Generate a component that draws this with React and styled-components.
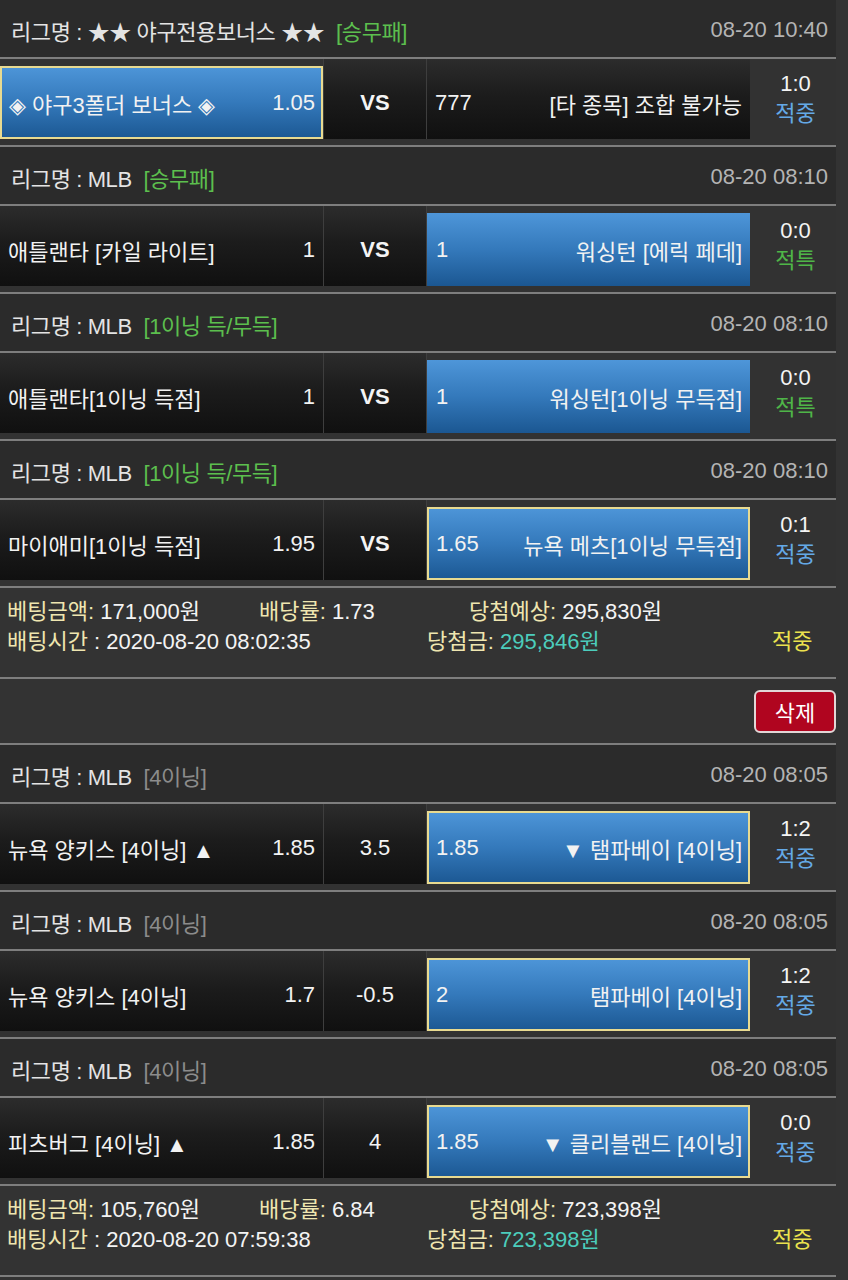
import React from "react";
import styled, { createGlobalStyle, css } from "styled-components";

const Global = createGlobalStyle`
  html, body { margin: 0; padding: 0; background: #333333; }
  body { font-family: "Liberation Sans", "Noto Sans CJK KR", sans-serif; color: #eeeeee; }
`;

const Page = styled.div`
  width: 836px;
  font-size: 22px;
`;

const Header = styled.div`
  height: 59px;
  box-sizing: border-box;
  padding: 3px 8px 0 11px;
  display: flex;
  align-items: center;
  justify-content: space-between;
  background: #2b2b2b;
  border-bottom: 2px solid #7e7e7e;
  color: #e4e4e4;
`;

const League = styled.span`
  letter-spacing: -0.4px;
`;

const Tag = styled.span`
  margin-left: 6px;
  color: ${(p) => (p.$gray ? "#8c8c8c" : "#5cbf4e")};
`;

const Time = styled.span`
  color: #b4b4b4;
`;

const MatchRow = styled.div`
  display: flex;
  height: 88px;
  box-sizing: border-box;
  padding-bottom: 6px;
  background: #323232;
  border-bottom: 2px solid #7e7e7e;
`;

const darkBg = css`
  background: linear-gradient(#2c2c2c 0%, #1c1c1c 45%, #101010 100%);
`;

const Side = styled.div`
  width: 323px;
  box-sizing: border-box;
  display: flex;
  align-items: center;
  justify-content: space-between;
  color: #f2f2f2;
  ${(p) =>
    p.$blue
      ? css`
          margin-top: 7px;
          height: 73px;
          padding: 0 8px 0 9px;
          background: linear-gradient(#4e96d9 0%, #3479bb 50%, #1b5792 100%);
          box-shadow: ${p.$sel ? "inset 0 0 0 2px #e8da90" : "none"};
        `
      : css`
          height: 80px;
          padding: 8px 8px 0 8px;
          ${darkBg}
        `}
`;

const Mid = styled.div`
  width: 104px;
  height: 80px;
  box-sizing: border-box;
  padding-top: 8px;
  display: flex;
  align-items: center;
  justify-content: center;
  border-left: 1px solid #3e3e3e;
  border-right: 1px solid #3e3e3e;
  font-weight: ${(p) => (p.$bold ? 700 : 400)};
  color: #f4f4f4;
  ${darkBg}
`;

const Score = styled.div`
  flex: 1;
  display: flex;
  flex-direction: column;
  align-items: center;
  justify-content: center;
  padding-left: 5px;
  line-height: 30px;
  color: #f4f4f4;
`;

const Result = styled.span`
  color: ${(p) => (p.$special ? "#4fb548" : "#64a9e6")};
`;

const Summary = styled.div`
  box-sizing: border-box;
  height: 91px;
  padding: 9px 0 0 7px;
  background: #333333;
  border-bottom: 2px solid #7e7e7e;
  line-height: 30px;
`;

const SumLine = styled.div`
  display: flex;
  white-space: nowrap;
`;

const SumItem = styled.div`
  width: ${(p) => p.$w}px;
  flex: none;
`;

const Label = styled.span`
  color: #efe6b0;
`;

const Val = styled.span`
  color: ${(p) => (p.$teal ? "#4ccdbc" : "#f4f4f4")};
`;

const Hit = styled.span`
  color: #ebe24e;
`;

const DeleteRow = styled.div`
  height: 66px;
  box-sizing: border-box;
  display: flex;
  align-items: center;
  justify-content: flex-end;
  background: #333333;
  border-bottom: 2px solid #7e7e7e;
`;

const DeleteBtn = styled.button`
  width: 82px;
  height: 43px;
  border: 2px solid #e2d6d6;
  border-radius: 6px;
  background: #b0051f;
  color: #ffffff;
  font-family: inherit;
  font-size: 22px;
  padding: 0;
`;

const matchesA = [
  {
    league: "★★ 야구전용보너스 ★★",
    tag: "[승무패]",
    time: "08-20 10:40",
    home: "◈ 야구3폴더 보너스 ◈",
    homeOdds: "1.05",
    homeSel: "sel",
    mid: "VS",
    awayOdds: "777",
    away: "[타 종목] 조합 불가능",
    awaySel: null,
    score: "1:0",
    result: "적중",
  },
  {
    league: "MLB",
    tag: "[승무패]",
    time: "08-20 08:10",
    home: "애틀랜타 [카일 라이트]",
    homeOdds: "1",
    homeSel: null,
    mid: "VS",
    awayOdds: "1",
    away: "워싱턴 [에릭 페데]",
    awaySel: "blue",
    score: "0:0",
    result: "적특",
  },
  {
    league: "MLB",
    tag: "[1이닝 득/무득]",
    time: "08-20 08:10",
    home: "애틀랜타[1이닝 득점]",
    homeOdds: "1",
    homeSel: null,
    mid: "VS",
    awayOdds: "1",
    away: "워싱턴[1이닝 무득점]",
    awaySel: "blue",
    score: "0:0",
    result: "적특",
  },
  {
    league: "MLB",
    tag: "[1이닝 득/무득]",
    time: "08-20 08:10",
    home: "마이애미[1이닝 득점]",
    homeOdds: "1.95",
    homeSel: null,
    mid: "VS",
    awayOdds: "1.65",
    away: "뉴욕 메츠[1이닝 무득점]",
    awaySel: "sel",
    score: "0:1",
    result: "적중",
  },
];

const matchesB = [
  {
    league: "MLB",
    tag: "[4이닝]",
    gray: true,
    time: "08-20 08:05",
    home: "뉴욕 양키스 [4이닝] ▲",
    homeOdds: "1.85",
    homeSel: null,
    mid: "3.5",
    awayOdds: "1.85",
    away: "▼ 탬파베이 [4이닝]",
    awaySel: "sel",
    score: "1:2",
    result: "적중",
  },
  {
    league: "MLB",
    tag: "[4이닝]",
    gray: true,
    time: "08-20 08:05",
    home: "뉴욕 양키스 [4이닝]",
    homeOdds: "1.7",
    homeSel: null,
    mid: "-0.5",
    awayOdds: "2",
    away: "탬파베이 [4이닝]",
    awaySel: "sel",
    score: "1:2",
    result: "적중",
  },
  {
    league: "MLB",
    tag: "[4이닝]",
    gray: true,
    time: "08-20 08:05",
    home: "피츠버그 [4이닝] ▲",
    homeOdds: "1.85",
    homeSel: null,
    mid: "4",
    awayOdds: "1.85",
    away: "▼ 클리블랜드 [4이닝]",
    awaySel: "sel",
    score: "0:0",
    result: "적중",
  },
];

function Match({ m }) {
  return (
    <>
      <Header>
        <League>
          리그명 : {m.league} <Tag $gray={m.gray}>{m.tag}</Tag>
        </League>
        <Time>{m.time}</Time>
      </Header>
      <MatchRow>
        <Side $blue={!!m.homeSel} $sel={m.homeSel === "sel"}>
          <span>{m.home}</span>
          <span>{m.homeOdds}</span>
        </Side>
        <Mid $bold={m.mid === "VS"}>{m.mid}</Mid>
        <Side $blue={!!m.awaySel} $sel={m.awaySel === "sel"}>
          <span>{m.awayOdds}</span>
          <span>{m.away}</span>
        </Side>
        <Score>
          <span>{m.score}</span>
          <Result $special={m.result === "적특"}>{m.result}</Result>
        </Score>
      </MatchRow>
    </>
  );
}

function BetSummary({ amount, rate, expected, time, won }) {
  return (
    <Summary>
      <SumLine>
        <SumItem $w={252}>
          <Label>베팅금액:</Label> <Val>{amount}</Val>
        </SumItem>
        <SumItem $w={210}>
          <Label>배당률:</Label> <Val>{rate}</Val>
        </SumItem>
        <SumItem $w={300}>
          <Label>당첨예상:</Label> <Val>{expected}</Val>
        </SumItem>
      </SumLine>
      <SumLine>
        <SumItem $w={420}>
          <Label>배팅시간</Label> <Val>: {time}</Val>
        </SumItem>
        <SumItem $w={345}>
          <Label>당첨금:</Label> <Val $teal>{won}</Val>
        </SumItem>
        <SumItem $w={60}>
          <Hit>적중</Hit>
        </SumItem>
      </SumLine>
    </Summary>
  );
}

export default function App() {
  return (
    <Page>
      <Global />
      {matchesA.map((m, i) => (
        <Match key={"a" + i} m={m} />
      ))}
      <BetSummary
        amount="171,000원"
        rate="1.73"
        expected="295,830원"
        time="2020-08-20 08:02:35"
        won="295,846원"
      />
      <DeleteRow>
        <DeleteBtn>삭제</DeleteBtn>
      </DeleteRow>
      {matchesB.map((m, i) => (
        <Match key={"b" + i} m={m} />
      ))}
      <BetSummary
        amount="105,760원"
        rate="6.84"
        expected="723,398원"
        time="2020-08-20 07:59:38"
        won="723,398원"
      />
    </Page>
  );
}
